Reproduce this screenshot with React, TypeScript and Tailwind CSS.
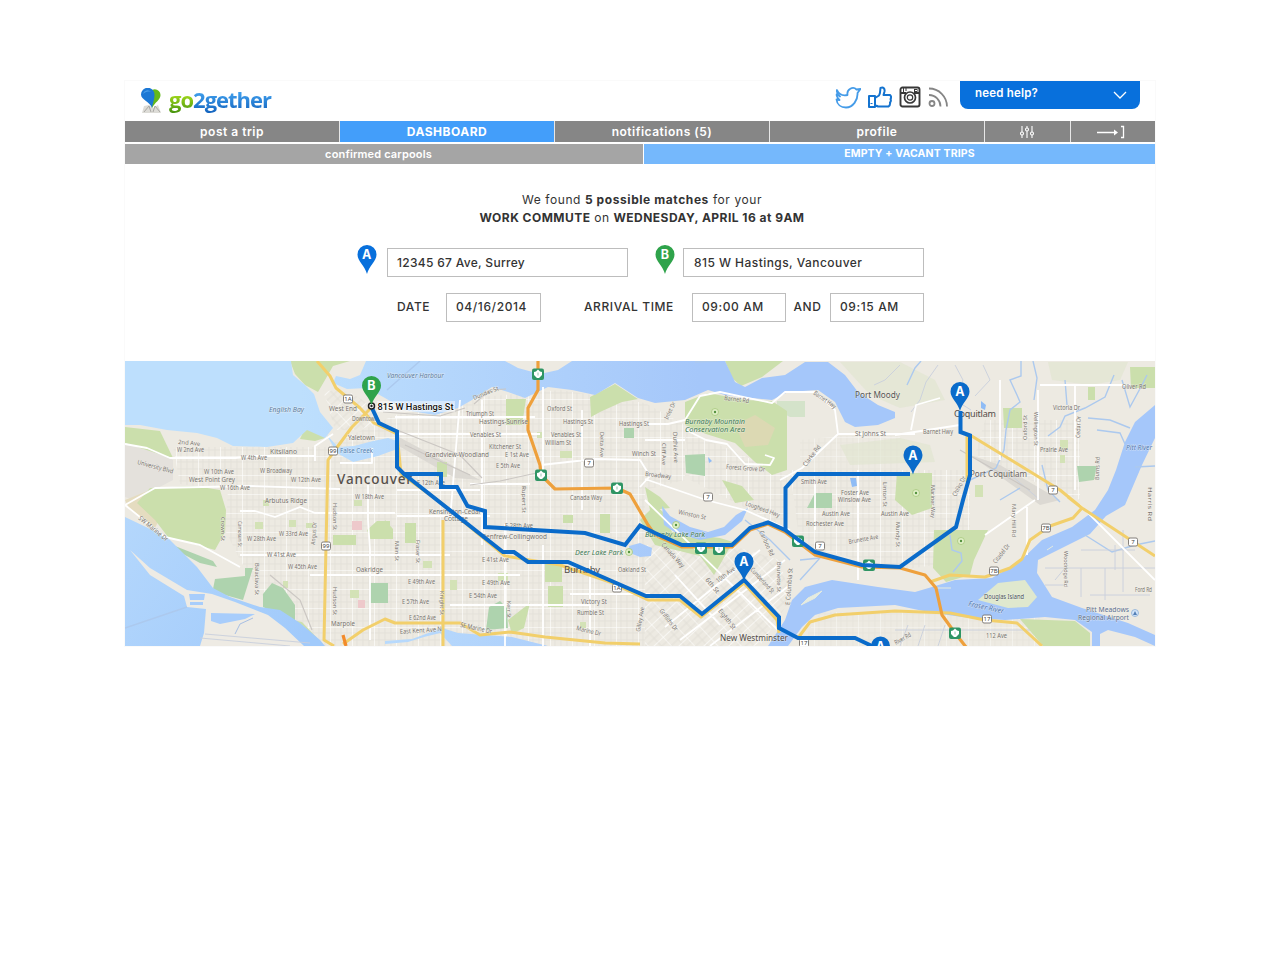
import React from "react";

type LabelSpec = [text: string, x: number, y: number, width: number, size?: number, rotate?: number, fill?: string, bold?: boolean, italic?: boolean];

const LABELS: LabelSpec[] = [
  ["English Bay", 269, 412, 35, 7, 0, "#5b7da3", false, true],
  ["Vancouver Harbour", 387, 378, 57, 7, 0, "#5b7da3", false, true],
  ["West End", 329, 411, 28],
  ["Downtown", 352, 421, 26],
  ["Yaletown", 348, 440, 27],
  ["False Creek", 340, 453, 33, 7, 0, "#4f7fb5"],
  ["Kitsilano", 270, 454, 27],
  ["W 2nd Ave", 177, 452, 27],
  ["2nd Ave", 178, 444, 22, 6, 5],
  ["W 4th Ave", 241, 460, 26],
  ["University Blvd", 137, 464, 37, 6.5, 15],
  ["W 10th Ave", 204, 474, 30],
  ["W Broadway", 260, 473, 32],
  ["West Point Grey", 189, 482, 46],
  ["W 12th Ave", 291, 482, 30],
  ["W 16th Ave", 220, 490, 30],
  ["W 18th Ave", 355, 499, 29],
  ["Arbutus Ridge", 265, 503, 42],
  ["SW Marine Dr", 138, 519, 36, 6.5, 39],
  ["Crown St", 221, 517, 24, 6, 90],
  ["Camosun St", 238, 521, 26, 6, 90],
  ["W 28th Ave", 247, 541, 29],
  ["W 33rd Ave", 279, 536, 29],
  ["W 41st Ave", 267, 557, 29],
  ["W 45th Ave", 288, 569, 29],
  ["Balaclava St", 255, 563, 32, 6, 90],
  ["Angus Dr", 315, 545, 23, 6, -86],
  ["Hudson St", 333, 503, 27, 6, 90],
  ["Hudson St", 333, 587, 28, 6, 90],
  ["Oakridge", 356, 572, 27],
  ["Marpole", 331, 626, 24],
  ["Triumph St", 466, 416, 28],
  ["Hastings-Sunrise", 479, 424, 49],
  ["Venables St", 470, 437, 31],
  ["Kitchener St", 489, 449, 32],
  ["E 1st Ave", 505, 457, 24],
  ["Grandview-Woodland", 425, 457, 64],
  ["E 5th Ave", 496, 468, 24],
  ["E 12th Ave", 417, 485, 28],
  ["Dundas St", 474, 400, 27, 6, -22],
  ["Oxford St", 547, 411, 25],
  ["Hastings St", 563, 424, 30],
  ["Venables St", 551, 437, 30],
  ["William St", 545, 445, 26],
  ["Hastings St", 619, 426, 30],
  ["Delta Ave", 600, 432, 25, 6, 90],
  ["Winch St", 632, 456, 24],
  ["Canada Way", 570, 500, 32],
  ["Rupert St", 522, 486, 27, 6, 90],
  ["Kensington-Cedar", 429, 514, 52],
  ["Cottage", 444, 521, 24],
  ["E 28th Ave", 505, 528, 28],
  ["Renfrew-Collingwood", 482, 539, 65],
  ["Main St", 395, 541, 20, 6, 90],
  ["Fraser St", 416, 540, 23, 6, 90],
  ["E 41st Ave", 482, 562, 27],
  ["E 49th Ave", 408, 584, 27],
  ["E 49th Ave", 482, 585, 28],
  ["E 54th Ave", 469, 598, 28],
  ["E 57th Ave", 402, 604, 27],
  ["E 62nd Ave", 409, 620, 27],
  ["East Kent Ave N", 400, 634, 42, 6.5, -4],
  ["Knight St", 440, 591, 24, 6, 90],
  ["Kerr St", 507, 601, 17, 6, 90],
  ["SE Marine Dr", 460, 627, 32, 7, 12],
  ["Deer Lake Park", 575, 555, 48, 7, 0, "#407a55", false, true],
  ["Oakland St", 618, 572, 28],
  ["Victory St", 581, 604, 26],
  ["Rumble St", 577, 615, 27],
  ["Marine Dr", 576, 630, 25, 6.5, 14],
  ["Gilley Ave", 640, 632, 25, 6, -80],
  ["Burnaby Mountain", 685, 424, 60, 7, 0, "#407a55", false, true],
  ["Conservation Area", 685, 432, 60, 7, 0, "#407a55", false, true],
  ["Barnet Rd", 724, 400, 25, 6.5, 7],
  ["Barnet Hwy", 813, 394, 26, 6.5, 35],
  ["Inlet Dr", 668, 420, 19, 6, -65],
  ["Cliff Ave", 662, 443, 22, 6, 90],
  ["Duthie Ave", 673, 432, 31, 6, 88],
  ["Forest Grove Dr", 726, 469, 39, 6.5, 4],
  ["Clarke Rd", 806, 467, 25, 6.5, -53],
  ["Broadway", 645, 476, 26, 6.5, 6],
  ["Winston St", 678, 514, 28, 6.5, 12],
  ["Lougheed Hwy", 745, 505, 36, 6.5, 20],
  ["St Johns St", 855, 436, 31],
  ["Port Moody", 855, 398, 45, 8, 0, "#555"],
  ["Smith Ave", 801, 484, 26],
  ["Foster Ave", 841, 495, 28],
  ["Winslow Ave", 838, 502, 33],
  ["Linton St", 883, 482, 25, 6, 90],
  ["Austin Ave", 822, 516, 28],
  ["Austin Ave", 881, 516, 28],
  ["Rochester Ave", 806, 526, 38],
  ["Brunette Ave", 849, 544, 30, 6.5, -10],
  ["Mundy St", 896, 522, 25, 6, 90],
  ["Burnaby Lake Park", 645, 537, 60, 7, 0, "#407a55", false, true],
  ["Canada Way", 661, 545, 31, 6.5, 48],
  ["Cariboo Rd", 759, 532, 27, 6.5, 65],
  ["10th Ave", 718, 583, 22, 6.5, -37],
  ["6th St", 705, 580, 18, 6.5, 50],
  ["Cumberland St", 750, 570, 32, 6.5, 48],
  ["Eighth St", 718, 611, 24, 6.5, 52],
  ["Griffiths Dr", 659, 611, 26, 6.5, 52],
  ["E Columbia St", 790, 605, 37, 6.5, -86],
  ["Brunette St", 777, 562, 30, 6, 90],
  ["New Westminster", 720, 641, 68, 8, 0, "#504b47"],
  ["Barnet Hwy", 923, 434, 30],
  ["Victoria Dr", 1053, 410, 27],
  ["Oliver Rd", 1122, 389, 24],
  ["Oxford St", 1027, 440, 25, 6, -90],
  ["Wellington St", 1034, 412, 34, 6, 90],
  ["Cedar Dr", 1080, 438, 22, 6, -88],
  ["Prairie Ave", 1040, 452, 28],
  ["Pitt River", 1126, 450, 26, 7, 0, "#4f77b3", false, true],
  ["Burns Rd", 1099, 480, 23, 6, -88],
  ["Port Coquitlam", 970, 477, 57, 8, 0, "#6b6462"],
  ["Mariner Way", 931, 485, 33, 6, 90],
  ["Chilko Dr", 956, 497, 22, 6.5, -62],
  ["Harris Rd", 1148, 487, 34, 6, 90],
  ["Mary Hill Rd", 1012, 504, 33, 6, 90],
  ["Citadel Dr", 996, 564, 23, 6.5, -52],
  ["Woodridge Rd", 1064, 551, 36, 6, 90],
  ["Douglas Island", 984, 599, 40, 7, 0, "#47515a"],
  ["Fraser River", 968, 606, 36, 7.5, 12, "#4f77b3", false, true],
  ["Pitt Meadows", 1086, 612, 43, 7, 0, "#5c6f8f"],
  ["Regional Airport", 1078, 620, 51, 7, 0, "#5c6f8f"],
  ["Ford Rd", 1135, 592, 17],
  ["112 Ave", 986, 638, 21],
  ["River Rd", 896, 645, 18, 6.5, -30],
];

const HIGHWAY_SHIELDS: [number, number][] = [[538, 374], [541, 475], [617, 488], [701, 548], [719, 549], [798, 541], [869, 565], [955, 633]];

const ROUTE_SHIELDS: [string, number, number][] = [
  ["1A", 348, 399], ["99", 333, 451], ["99", 326, 546], ["7", 589, 463], ["7", 708, 497], ["1A", 617, 588], ["7", 820, 546], ["7", 1053, 490],
  ["7B", 1046, 528], ["7B", 994, 571], ["7", 1133, 542], ["17", 987, 619], ["17", 804, 643],
];

const WATER = [
  "M125 361H291L293 375 305 385 314 394 320 412 333 428 325 438 307 430 293 443 267 447 233 446 217 438 197 433 167 430 140 425 125 425Z",
  "M326 434L338 447 354 446 373 441 388 438 397 441 397 449 378 456 353 462 337 453Z",
  "M366 361H505L518 368 540 374 558 370 572 361H725L735 382 745 387 762 378 785 375 805 362H828L845 375 858 392 878 405 895 412 895 418 878 425 855 427 845 422 835 402 818 390 788 392 772 400 752 398 725 395 708 390 685 400 655 403 638 398 615 383 595 395 572 390 548 387 525 398 508 392 492 387 472 400 458 408 435 415 405 410 385 398 367 388 347 389 333 383 336 376 350 379 360 375Z",
  "M768 646L785 620 792 600 805 587 832 580 878 587 915 592 932 587 955 580 992 578 1018 563 1042 540 1072 527 1095 510 1108 490 1116 470 1125 442 1135 422 1155 405V438L1142 465 1125 505 1106 516 1090 534 1072 543 1038 560 1037 573 1052 597 1082 608 1128 623 1155 635V646L1135 637 1108 630 1100 634 1100 646H1092L1092 632 1075 620 1045 617 1005 620 962 617 928 612 895 605 838 608 815 615 802 627 788 646Z",
  "M385 641L412 639 442 628 458 633 485 635 512 637 548 646H452L440 633 424 637 408 642 385 644Z",
  "M662 506L670 516 690 527 708 532 724 527 736 515 748 508 742 521 725 535 700 540 676 533 664 525Z",
  "M629 546L640 543 652 548 651 556 640 557 630 553Z",
];

const SOUTH_SEA = "M125 517L167 537 197 567 213 588 230 597 260 607 280 610 300 623 320 640 325 646H125Z";

const PARKS = [
  "M125 427L160 431 173 458 165 456 125 443Z",
  "M290 361H350L333 366 325 380 318 392 305 385 295 374Z",
  "M150 488L195 486 220 490 226 510 225 532 215 550 168 537 155 520 137 503Z",
  "M506 399H526L522 425H506Z",
  "M685 402L708 393 745 400 772 401 787 411V470L772 475 755 462 735 443 706 434 685 425Z",
  "M725 361H783L762 377 741 386 732 378Z",
  "M590 397L615 384 638 399 622 402 600 412 591 417Z",
  "M655 505L663 512 672 532 720 538 733 542 714 575 700 556 655 545 640 520Z",
  "M934 530H988L974 560 970 575 946 582 933 568Z",
  "M897 473H932V508L912 515 895 500Z",
  "M1020 619L1075 621 1090 633V646H1043Z",
  "M333 535H356V545H333ZM367 530L377 521H390V539H370Z",
  "M545 560H562V582H545ZM548 586H563V607H548ZM508 620L530 603 524 628 512 634Z",
  "M1130 367H1155V388H1131ZM1003 408H1022V428H1004ZM1088 387H1095V400H1088Z",
  "M645 487L660 497 670 508 650 510Z",
  "M600 514H610V533H600ZM563 515H573V523H563ZM385 520L393 529V539H385ZM405 523H416V543H405ZM437 462H447V477H437Z",
  "M305 428L322 430 325 438 315 441 300 439Z",
  "M722 480L742 486 754 500 735 503Z",
  "M268 615L302 622 319 640 302 635 281 626Z",
];

const DARK_PARKS = [
  "M175 546L213 561 217 567 200 563 183 554Z",
  "M215 579L245 576V568H253L243 600 225 595 213 589Z",
  "M272 583L283 588 295 605 295 622 263 607 263 594Z",
  "M370 583H388V603H370ZM624 428H634V438H624Z",
  "M486 630L489 607 500 601 507 608 508 628Z",
  "M685 455L705 454V476L686 473Z",
  "M815 493H832V508H807Z",
  "M1077 466H1097L1094 480 1079 482Z",
];

const WHITE_ROADS =
  "M125 444L147 448 170 458 235 458 255 456H315M125 505L155 488 250 486 340 489M125 505L165 537 200 545 240 567M240 511L255 511 275 517 300 507 315 513H395M315 461V446L333 434M340 463H372V448M368 485V520L370 550V640M240 555H450M310 575H520M395 417H535M397 434H540M460 400L450 520M482 400V545M543 387V475M582 410V510M541 465L595 459 640 460 650 476 640 487M470 484H530M397 490H480M397 516H490M505 524V646M543 545V646M645 424H668L685 420 700 396 720 392 772 403 785 392 815 392 835 410 838 434 802 468 780 480M686 430L706 440 727 444 745 464 770 465 774 458 765 455M645 479L706 500 745 510 790 530M838 434H915M815 480V530M858 470V580M645 440H685M645 500L780 632M675 575L720 625M665 627L760 550M680 640L785 560M710 646L790 585M911 430L916 405 940 398M1000 380V460M1038 390V500M1075 385V490M985 535L1035 500M1027 505V555M1080 505L1155 580M1040 385H1130M895 435L960 425M570 594H650M450 605H590M590 560V646";

const MINOR_STREETS =
  "M1045 568H1155M1081 568V597M1105 568V600M1123 530V592M1081 550H1135M1045 585H1065M1115 545V570M938 365L926 382 920 400 911 412M900 365L885 380 874 385M955 365L963 380 955 400 971 410M983 365L990 380 975 396M1005 470L1040 500M908 625L900 646M925 625L918 646M945 625L938 646M895 630H1030M1065 568L1055 580M1090 595H1150M200 638L290 646M205 634L310 643";

const CREEKS =
  "M1021 361L1021 376 1010 380 1017 395 1020 402 1010 410 1006 430 1004 450 996 468 970 480M1033 361L1037 378 1034 400M1048 436L1060 427 1065 416 1085 408 1105 397 1114 375M1088 418L1110 420 1130 428M1122 380L1130 407 1142 385 1147 375M1097 430L1120 433 1125 444M1135 467L1155 466M1085 535L1112 552 1135 545 1155 541M950 535L952 550 961 553 962 561 953 572M907 385L915 368 921 361M1065 380L1067 405M1042 465L1048 490 1060 502M800 560L820 558 800 580M745 520L770 540 790 560M695 362L718 361M125 628L187 607M387 390L420 361M1000 500L1020 488";

const ROUTES = [
  "M371 406L379 423 397 431.500V467L404 474H441V487H457L467.500 506 485 511V527L585 533 625 545 640 525.500 655 533 682 545H732L750 528 768 522.500 785 530 815 552 862 565 900 567 956 527 963 500 970 475V435.500L960.500 432V411",
  "M785.500 530V488L798 474H910",
  "M404 474L503 552H514L528 562H568L646 596H680L702 614 744 580 779 617V628L798 638H855L872 646",
];

function PinShape({ cx, cy, letter, color }: { cx: number; cy: number; letter: string; color: string }) {
  return (
    <g transform={`translate(${cx} ${cy})`}>
      <path d="M0 19C-2 11-9.500 6-9.500-.5a9.500 9.500 0 0 1 19 0C9.500 6 2 11 0 19Z" fill={color} />
      <text y="4.200" textAnchor="middle" fill="#fff" fontSize="12.500" fontWeight="700" fontFamily="Inter, sans-serif">{letter}</text>
    </g>
  );
}

function FormPin({ letter, color }: { letter: string; color: string }) {
  return (
    <svg className="-mt-[3px] h-[30px] w-5 shrink-0" viewBox="-10 -10 20 30">
      <PinShape cx={0} cy={0} letter={letter} color={color} />
    </svg>
  );
}

function RouteMap() {
  return (
    <svg className="block h-[285px] w-full" viewBox="125 361 1030 285" fontFamily="'Noto Sans', sans-serif">
      <defs>
        <pattern id="grid" width="22" height="19" patternUnits="userSpaceOnUse">
          <path d="M5 0V19M11 0V19M17 0V19M0 6H22M0 13H22" stroke="#dfdcd4" strokeWidth=".6" />
          <path d="M0 0H22M0 0V19" stroke="#fff" strokeWidth="1.200" />
        </pattern>
        <pattern id="diagonal" width="17" height="17" patternUnits="userSpaceOnUse" patternTransform="rotate(47)">
          <path d="M6 0V17M12 0V17M0 8H17" stroke="#dcd8d0" strokeWidth=".6" />
          <path d="M0 0H17M0 0V17" stroke="#fff" strokeWidth="1.200" />
        </pattern>
        <linearGradient id="sea" gradientUnits="userSpaceOnUse" x1="300" y1="361" x2="700" y2="361">
          <stop offset="0" stopColor="#bddffd" />
          <stop offset="1" stopColor="#a5c7fa" />
        </linearGradient>
        <linearGradient id="southSea" gradientUnits="userSpaceOnUse" x1="125" y1="520" x2="300" y2="640">
          <stop offset="0" stopColor="#b4d7fc" />
          <stop offset="1" stopColor="#a1cafb" />
        </linearGradient>
      </defs>

      <rect x="125" y="361" width="1030" height="286" fill="#edeae2" />
      <path d="M173 447H325L395 415 480 397 560 390 645 403 685 425V480L645 490V646H325L265 600 240 560 225 530 228 490 180 484Z" fill="url(#grid)" />
      <path d="M790 470H970V560L900 570 800 545ZM985 420H1080V500L1030 480 975 455ZM685 430L787 475V530L760 515 690 480Z" fill="url(#grid)" />
      <path d="M645 545L730 545 780 560 790 600 760 646H645ZM323 390L350 392 370 405 380 425 355 430 335 430Z" fill="url(#diagonal)" />
      <path d="M800 440L840 436H900V470H800ZM820 612H1040V646H800Z" fill="url(#grid)" opacity=".6" />
      <path d="M125 445L150 448 173 460V480L135 500 125 497Z" fill="#e4e1dc" />
      <path d="M125 500L150 490 165 508 155 528 130 510Z" fill="#e5dcc0" />
      <path d="M970 455L1000 465 1060 500 1040 505ZM395 435L480 480 455 478 397 445Z" fill="#dcd9d3" />
      <path d="M840 362H900L935 380 945 400 900 408 870 395ZM1048 362H1128L1120 380 1090 385 1052 380ZM840 445L900 438 930 445 935 462 850 465Z" fill="#dfe4ce" opacity=".6" />
      <path d="M777 401H805V417H790L777 410Z" fill="#c9dfc0" opacity=".7" />

      {PARKS.map((d) => <path key={d} d={d} fill="#cbdfac" />)}
      {DARK_PARKS.map((d) => <path key={d} d={d} fill="#aed3ae" />)}
      <path d="M735 425L755 415 775 428 768 445 745 447Z" fill="#dcd9b3" />
      <path d="M352 521H362V530H352ZM358 600H365V608H358Z" fill="#eec9cb" />
      <path d="M263 500h6v6h-6zM289 520h7v7h-7zM255 522h8v7h-8zM306 523h7v5h-7zM354 500h8v6h-8zM350 590h9v8h-9zM283 581h5v7h-5zM537 432h5v6h-5zM560 451h12v7h-12zM450 580h7v10h-7zM498 573h10v8h-10zM423 561h9v7h-9zM580 622h6v6h-6zM1060 440h8v9h-8zM975 485h8v12h-8zM1060 455h5v8h-5z" fill="#d3e2b6" />

      {WATER.map((d) => <path key={d} d={d} fill="url(#sea)" />)}
      <path d={SOUTH_SEA} fill="url(#southSea)" />
      <path d="M130 550L150 568 187 590 212 594 235 602 268 615 285 628 304 646H200L204 633 206 609 187 607 184 596 150 575Z" fill="#eeebe4" />
      <path d="M211 613L255 614 245 619 220 624 211 621ZM189 594H205L204 600H190ZM190 602H203V605H190Z" fill="#a8cdfb" />
      <path d="M235 634L240 624 253 618" fill="none" stroke="#a8bfe3" />
      <path d="M978 600L998 583 1025 580 1037 597 1028 607 1008 608Z" fill="#dfe8ce" />
      <path d="M808 598L822 591 815 598 801 605ZM936 588H951M1047 550L1053 546" fill="#e5ebdf" stroke="#e5ebdf" />
      <path d="M850 478L856 478 857 486 852 487ZM981 401L986 405 985 410 981 408ZM708 457l4 4-3 2z" fill="#8fbcf5" />

      <path d={CREEKS} fill="none" stroke="#acc9ee" strokeWidth="1.400" />
      <path d={MINOR_STREETS} fill="none" stroke="#c8cfdd" strokeWidth=".9" />
      <path d={WHITE_ROADS} fill="none" stroke="#fff" strokeWidth="1.800" strokeLinejoin="round" />
      <path d="M474 404L490 390 506 389M397 430L460 455 482 478M405 445L470 475M383 412L440 416 465 408M470 485L500 481 541 472M270 575L300 600 312 630M960 450L1030 490" fill="none" stroke="#cbc7c3" strokeWidth="1.200" />

      <g fill="none" stroke="#f2cf6b" strokeWidth="3" strokeLinejoin="round">
        <path d="M317 361L330 376 336 388 360 408 374 423 397 434 401 474 440 502 505 556 560 565 610 582 648 600H680L701 617 744 583 777 620 779 633" />
        <path d="M371 408L352 427 338 446 328 460 326 546 324 640 334 646M343 644L363 630 385 619 395 623H460L480 635 510 632 545 637 605 643 640 644" />
        <path d="M443 520V646M967 436V482M970 435L1060 490 1082 508 1155 556M1068 497L1082 508 1073 518 1050 526 1030 540 1022 559 1010 568 985 577 950 575 930 582" />
        <path d="M798 638L810 622 835 615 895 611 950 613 985 620 1017 623 1042 646" />
      </g>
      <g fill="none" stroke="#eea03c" strokeWidth="3.200" strokeLinejoin="round">
        <path d="M538 361V390L528 408V430L540 465 541 475 555 489 617 488 630 494 648 525 655 535 682 547H732L750 530 768 524 785 532 815 555 862 567 900 568 925 575 936 588 942 615 955 633 966 647" />
        <path d="M343 635L346 646" stroke="#f28a2a" />
      </g>

      {LABELS.map(([text, x, y, width, size = 6.5, rotate = 0, fill = "#77736e", bold = false, italic = false]) => (
        <text key={`${text}-${x}-${y}`} x={x} y={y} textLength={width} lengthAdjust="spacingAndGlyphs" fontSize={size} fill={fill} fontWeight={bold ? 700 : 400} fontStyle={italic ? "italic" : "normal"} transform={`rotate(${rotate} ${x} ${y})`} stroke="#f7f5f0" strokeWidth="1" strokeOpacity=".55" paintOrder="stroke">
          {text}
        </text>
      ))}
      <text x="337" y="483.500" textLength="75" fontSize="13.500" fontWeight="500" fill="#56504b">Vancouver</text>
      <text x="564" y="573" textLength="36" fontSize="9.500" fill="#504a47">Burnaby</text>
      <text x="954" y="417" textLength="42" fontSize="9" fill="#504a47">Coquitlam</text>

      {[[715, 412], [676, 525], [629, 552], [916, 493], [961, 541]].map(([x, y]) => (
        <g key={x}><circle cx={x} cy={y} r="3.500" fill="#e2f0c8" stroke="#a5c67b" strokeWidth=".8" /><circle cx={x} cy={y} r="1.200" fill="#53923f" /></g>
      ))}
      <circle cx="1135" cy="613" r="3.500" fill="#d4e6fa" stroke="#8caed6" strokeWidth=".8" />
      <path d="M1135 611L1137 615H1133Z" fill="#537fb5" />

      {ROUTE_SHIELDS.map(([text, x, y]) => (
        <g key={`${x}-${y}`}>
          <rect x={x - 4.5} y={y - 4} width="9" height="8" rx="1.500" fill="#fff" stroke="#77736e" strokeWidth=".9" />
          <text x={x} y={y + 2.3} textAnchor="middle" fontSize="6" fill="#444">{text}</text>
        </g>
      ))}
      {HIGHWAY_SHIELDS.map(([x, y]) => (
        <g key={`${x}-${y}`}>
          <rect x={x - 6} y={y - 5.5} width="12" height="11.500" rx="2" fill="#2f9564" />
          <path d={`M${x - 4} ${y - 2}l2-.5 2-2 2 2 2 .5v3l-3 3h-2l-3-3z`} fill="#fff" />
          <path d={`M${x} ${y - 1.5}v3`} stroke="#7bb99a" strokeWidth=".8" />
        </g>
      ))}

      <g fill="none" stroke="#0a6bca" strokeWidth="4" strokeLinejoin="miter">
        {ROUTES.map((d) => <path key={d} d={d} />)}
      </g>
      <rect x="377" y="401" width="78" height="11" fill="#fff" opacity=".45" />
      <circle cx="371.500" cy="406" r="3" fill="#fff" stroke="#222" strokeWidth="1.500" />
      <circle cx="371.500" cy="406" r="1.200" fill="#222" />
      <text x="377.500" y="409.500" textLength="76" lengthAdjust="spacingAndGlyphs" fontSize="9.500" fontWeight="500" fill="#111" stroke="#fff" strokeWidth="1" paintOrder="stroke" fontFamily="Roboto, sans-serif">815 W Hastings St</text>
      <PinShape cx={371.5} cy={386} letter="B" color="#2fa34b" />
      <PinShape cx={960} cy={392} letter="A" color="#0a6bca" />
      <PinShape cx={913} cy={455.5} letter="A" color="#0a6bca" />
      <PinShape cx={744} cy={562} letter="A" color="#0a6bca" />
      <PinShape cx={880.5} cy={646.5} letter="A" color="#0a6bca" />
    </svg>
  );
}

function Logo() {
  return (
    <div className="flex h-full items-start pl-4 pt-[5px]">
      <svg className="mt-0.5 h-[26px] w-[22px]" viewBox="0 0 22 26">
        <path d="M3 18L8 17 12 20 17 17 20 25H1Z" fill="#dddcd7" />
        <path d="M3 24L8 18 10 24M12 24L14 18 19 24" fill="none" stroke="#aaa9a5" />
        <path d="M11 20C11.500 15 8 12 8 7a5.500 5.500 0 0 1 11.500 0C19.500 12 14 14 11 20Z" fill="#64b91b" />
        <path d="M11 20C9.500 14 0 12 0 6.500a6.500 6.500 0 0 1 13.500 0C13.500 12 12 14 11 20Z" fill="#1c78d5" />
        <path d="M2 6a4.500 4.500 0 0 1 8-2C7 3 4 4 2 6Z" fill="#4a9de8" />
      </svg>
      <div className="ml-1.5 font-['Open_Sans',sans-serif] text-[22px] font-bold leading-[27px] tracking-[-1px]">
        <span className="inline-block bg-linear-to-b from-[#a5dc1c] from-30% to-[#46930d] bg-clip-text text-transparent">go</span>
        <span className="inline-block bg-linear-to-b from-[#42a2ef] from-20% to-[#1263be] bg-clip-text pr-0.5 text-transparent">2gether</span>
      </div>
    </div>
  );
}

function SocialIcons() {
  return (
    <div className="flex items-start gap-[7px] pt-[5px]">
      <svg className="h-6 w-[26px]" viewBox="0 0 26 24" fill="none" stroke="#449be8" strokeWidth="1.800" strokeLinejoin="round">
        <path d="M2 4C4 8.500 8 10 12.500 9 11.500 3 18 0 21.500 3.500L25.500 3 22.500 7C23 14 18 21.500 11 21.500 6 21.500 2 18.500 1.500 13.500L4.500 14C2 11.500 1 8.500 2 8L5 10.500C2.500 8.500 1.500 6 2 4Z" />
      </svg>
      <svg className="h-6 w-6" viewBox="0 0 24 24" fill="none" stroke="#1473cf" strokeWidth="2" strokeLinejoin="round">
        <path d="M1 10H7V21H1ZM7 12L11 9.500C12.500 7.500 12 4.500 12.500 2 15.500.5 17 3 16.500 5.500L15.500 9H22Q24 11 22.500 13 23.500 15 22 16.500 22.500 19 20.500 20.500H10L7 19M3.500 18V17" />
      </svg>
      <svg className="h-6 w-[22px]" viewBox="0 0 22 24" fill="none" stroke="#383838" strokeWidth="1.900">
        <rect x="1.500" y="1.500" width="19" height="19" rx="2" />
        <path d="M2 7H7M15 7H20" />
        <path d="M4.500 2V6M7 2V5" strokeWidth="1" />
        <rect x="15.500" y="3.500" width="2.500" height="2" strokeWidth="1" />
        <circle cx="11" cy="11.500" r="5.500" strokeWidth="1.700" /><circle cx="11" cy="11.500" r="2.700" strokeWidth="1.200" />
      </svg>
      <svg className="h-6 w-[22px]" viewBox="0 0 22 24" fill="none" stroke="#858585" strokeWidth="1.800">
        <circle cx="4" cy="17.500" r="2.500" /><path d="M1 9A11.500 11.500 0 0 1 12.500 20.500M1 2.500A18 18 0 0 1 19 20.500" />
      </svg>
    </div>
  );
}

const field = "flex h-[29px] items-center border border-[#bdbdbd] bg-white pl-[9px]";

export default function App() {
  return (
    <div className="min-h-[960px] bg-white pt-[81px] font-['Inter',sans-serif] text-xs text-[#333]">
      <main className="mx-auto w-[1030px] outline outline-[#fafafa]">
        <header className="flex h-[40px] justify-between">
          <Logo />
          <div className="flex pr-[15px]">
            <SocialIcons />
            <button className="ml-[10px] flex h-[28px] w-[180px] items-start justify-between rounded-b-lg bg-[#0870dc] px-[15px] pt-[4px] text-[11.5px] font-semibold leading-4 tracking-[0.2px] text-white">
              need help?
              <svg className="mt-1.5 mr-[-2px] h-2 w-[14px]" viewBox="0 0 14 8" fill="none" stroke="currentColor" strokeWidth="1.300"><path d="M1 1L7 7 13 1" /></svg>
            </button>
          </div>
        </header>

        <nav className="grid h-[21px] grid-cols-[214px_214px_214px_214px_85px_84px] gap-x-px bg-[#e7e7e7] text-xs font-semibold leading-[21px] tracking-[0.5px] text-white">
          <a className="bg-[#868686] text-center">post a trip</a>
          <a className="bg-[#439efa] text-center font-bold tracking-[0.5px]">DASHBOARD</a>
          <a className="bg-[#868686] text-center">notifications (5)</a>
          <a className="bg-[#868686] text-center">profile</a>
          <a className="flex items-center justify-center bg-[#868686] pr-0.5">
            <svg className="h-[14px] w-4" viewBox="0 0 16 14" fill="none" stroke="white" strokeWidth="1.100"><path d="M3 1V7M3 10V13M8 1V3M8 6V13M13 1V7M13 10V13" /><circle cx="3" cy="8.500" r="1.500" /><circle cx="8" cy="4.500" r="1.500" /><circle cx="13" cy="8.500" r="1.500" /></svg>
          </a>
          <a className="flex items-center justify-center bg-[#868686] pr-1">
            <svg className="h-[14px] w-[30px]" viewBox="0 0 30 14" fill="none" stroke="white" strokeWidth="1.300"><path d="M1 7.500H20M25 1.500H27.500V12.500H25" /><path d="M18 4.500L22 7.500 18 10.500Z" fill="white" stroke="none" /></svg>
          </a>
        </nav>
        <nav className="mt-0.5 grid h-[20px] grid-cols-[518px_511px] gap-x-px text-[11px] font-semibold leading-[20px] text-white">
          <a className="bg-[#a5a5a5] pr-[11px] text-center tracking-[0.15px]">confirmed carpools</a>
          <a className="bg-[#75b8fc] pl-5 text-center text-[10.5px] font-bold tracking-[0.15px]">EMPTY + VACANT TRIPS</a>
        </nav>

        <section className="h-[197px] pt-[27px]">
          <p className="pl-1 text-center leading-[18px] tracking-[0.47px]">
            <span className="tracking-[0.58px]">We found <b>5 possible matches</b> for your</span><br />
            <b>WORK COMMUTE</b> on <b>WEDNESDAY, APRIL 16 at 9AM</b>
          </p>
          <div className="mt-[21px] flex h-[28px] pl-[232px] font-medium tracking-[0.45px]">
            <FormPin letter="A" color="#0870dc" />
            <div className={`${field} ml-[10px] w-[241px]`}><span className="tracking-[0.3px]">12345 67 Ave, Surrey</span></div>
            <div className="ml-[27px] flex"><FormPin letter="B" color="#2fa34b" /></div>
            <div className={`${field} ml-[8px] w-[241px]`}><span className="pl-px">815 W Hastings, Vancouver</span></div>
          </div>
          <div className="mt-[17px] flex h-[28px] items-center pl-[272px] font-medium tracking-[0.6px]">
            <span className="w-[49px]">DATE</span>
            <div className={`${field} w-[95px]`}>04/16/2014</div>
            <span className="ml-[43px] w-[108px]">ARRIVAL TIME</span>
            <div className={`${field} w-[94px]`}>09:00 AM</div>
            <span className="w-[44px] pr-px text-center">AND</span>
            <div className={`${field} w-[94px]`}>09:15 AM</div>
          </div>
        </section>

        <RouteMap />
      </main>
    </div>
  );
}
